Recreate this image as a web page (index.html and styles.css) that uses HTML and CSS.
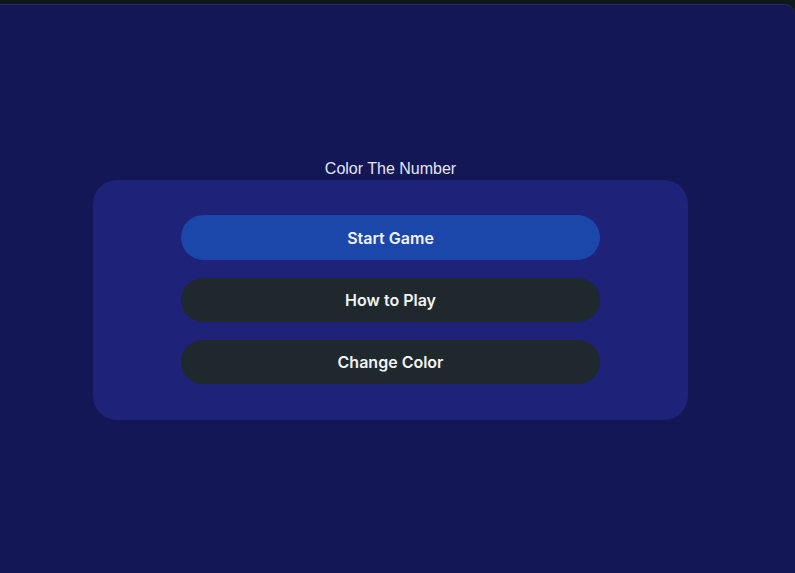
FILE: index.html
```html
<!DOCTYPE html>
<html>
<head>
<meta charset="utf-8">
<link rel="stylesheet" href="styles.css">
</head>
<body>
<div class="window">
  <main class="screen">
    <h1 class="title">Color The Number</h1>
    <section class="panel">
      <button class="btn btn-primary">Start Game</button>
      <button class="btn btn-dark">How to Play</button>
      <button class="btn btn-dark">Change Color</button>
    </section>
  </main>
</div>
</body>
</html>
```
FILE: styles.css
```css
html, body {
  margin: 0;
  padding: 0;
  height: 100%;
  background: #0f181b;
}
body {
  font-family: Inter, "Noto Sans", "Liberation Sans", sans-serif;
  padding-top: 4px;
  box-sizing: border-box;
}
.window {
  height: 100%;
  background: #131755;
  border-top-right-radius: 11px;
  border-top: 1px solid #24285e;
  box-sizing: border-box;
}
.screen {
  display: flex;
  flex-direction: column;
  align-items: center;
  padding-top: 154px;
  padding-right: 14px;
}
.title {
  margin: 0 0 1px 0;
  font-family: "Liberation Sans", Arial, sans-serif;
  font-size: 16px;
  font-weight: 400;
  color: #e3e6f6;
  line-height: 20px;
}
.panel {
  width: 595px;
  box-sizing: border-box;
  background: #1e2278;
  border-radius: 24px;
  padding: 35px 0 36px;
  display: flex;
  flex-direction: column;
  align-items: center;
  gap: 18px;
}
.btn {
  width: 419px;
  height: 45px;
  border: none;
  border-radius: 23px;
  font-family: inherit;
  font-size: 16px;
  font-weight: 600;
  color: #f2f3f6;
  margin: 0;
  padding: 0;
}
.btn-dark { height: 44px; }
.btn-primary { background: #1c47aa; }
.btn-dark { background: #1f282d; }
```
